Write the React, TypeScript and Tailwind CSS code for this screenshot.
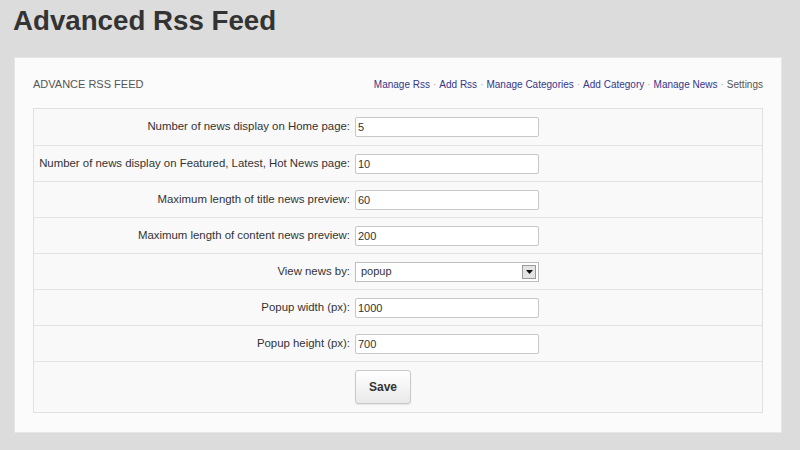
import React from "react";

const fields: Array<{ label: string; value: string; type?: "select" }> = [
  { label: "Number of news display on Home page:", value: "5" },
  { label: "Number of news display on Featured, Latest, Hot News page:", value: "10" },
  { label: "Maximum length of title news preview:", value: "60" },
  { label: "Maximum length of content news preview:", value: "200" },
  { label: "View news by:", value: "popup", type: "select" },
  { label: "Popup width (px):", value: "1000" },
  { label: "Popup height (px):", value: "700" },
];

const links = ["Manage Rss", "Add Rss", "Manage Categories", "Add Category", "Manage News"];

export default function App() {
  return (
    <div
      className="w-[800px] h-[450px] overflow-hidden bg-[#dcdcdc] text-[#333]"
      style={{ fontFamily: "'Liberation Sans', Arial, sans-serif" }}
    >
      <h1 className="pl-[13px] pt-[3px] h-[57px] text-[27.7px] font-bold leading-[36px] text-[#333]">
        Advanced Rss Feed
      </h1>

      <div className="ml-[14px] w-[768px] h-[376px] bg-[#fbfbfb] border border-[#e6e6e6] px-[18px]">
        {/* header */}
        <div className="flex items-center justify-between h-[50px] pt-[2px]">
          <span className="text-[11px] text-[#555]">ADVANCE RSS FEED</span>
          <div className="flex items-center text-[10px]">
            {links.map((l) => (
              <span key={l} className="flex items-center">
                <span className="text-[#35358a]">{l}</span>
                <span className="text-[#aaa] mx-[3px]">·</span>
              </span>
            ))}
            <span className="text-[#555]">Settings</span>
          </div>
        </div>

        {/* settings table */}
        <div className="border border-[#e0e0e0] bg-[#f9f9f9] text-[11.4px]">
          {fields.map((f, i) => (
            <div
              key={f.label}
              className={
                "grid grid-cols-[321px_1fr] items-center h-[36px] " +
                (i > 0 ? "border-t border-[#e4e4e4]" : "")
              }
            >
              <label className="text-right pr-[5px] text-[#333]">{f.label}</label>
              {f.type === "select" ? (
                <div className="flex items-center justify-between w-[184px] h-[20px] bg-white border border-[#bdbdbd] pl-[5px] pr-[2px] text-[11px]">
                  <span>{f.value}</span>
                  <span className="flex items-center justify-center w-[14px] h-[14px] bg-[#e4e4e4] border border-[#9a9a9a]">
                    <svg width="7" height="4" viewBox="0 0 7 4">
                      <path d="M0 0h7L3.5 4z" fill="#111" />
                    </svg>
                  </span>
                </div>
              ) : (
                <input
                  readOnly
                  value={f.value}
                  className="w-[184px] h-[20px] bg-white border border-[#c8c8c8] rounded-[2px] px-[2px] text-[11px] text-[#333] outline-none"
                />
              )}
            </div>
          ))}
          <div className="grid grid-cols-[321px_1fr] items-center h-[51px] border-t border-[#e4e4e4]">
            <span />
            <button className="w-[56px] h-[34px] rounded-[3px] border border-[#c9c9c9] bg-gradient-to-b from-white to-[#e9e9e9] text-[12px] font-bold text-[#333] shadow-[0_1px_1px_rgba(0,0,0,0.08)]">
              Save
            </button>
          </div>
        </div>
      </div>
    </div>
  );
}
